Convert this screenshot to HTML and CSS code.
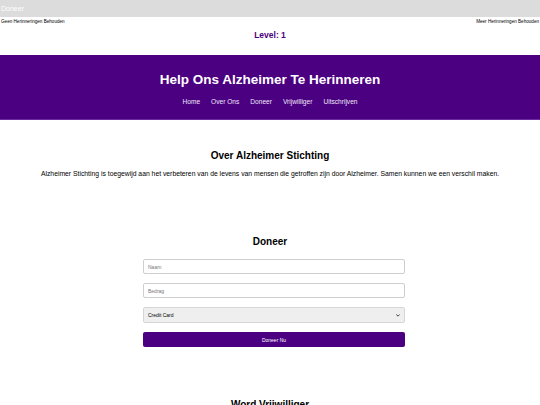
FILE: index.html
```html
<!DOCTYPE html>
<html lang="nl">
<head>
<meta charset="utf-8">
<title>Help Ons Alzheimer Te Herinneren</title>
<link rel="stylesheet" href="styles.css">
</head>
<body>
<div class="topbar">Doneer</div>
<div class="memory-row">
  <span>Geen Herinneringen Behouden</span>
  <span>Meer Herinneringen Behouden</span>
</div>
<div class="level">Level: 1</div>
<header class="site-header">
  <h1>Help Ons Alzheimer Te Herinneren</h1>
  <nav class="nav">
    <a href="#">Home</a>
    <a href="#">Over Ons</a>
    <a href="#">Doneer</a>
    <a href="#">Vrijwilliger</a>
    <a href="#">Uitschrijven</a>
  </nav>
</header>
<section class="about">
  <h2>Over Alzheimer Stichting</h2>
  <p>Alzheimer Stichting is toegewijd aan het verbeteren van de levens van mensen die getroffen zijn door Alzheimer. Samen kunnen we een verschil maken.</p>
</section>
<section class="donate">
  <h2>Doneer</h2>
  <form class="donate-form">
    <input type="text" placeholder="Naam">
    <input type="text" placeholder="Bedrag">
    <select><option>Credit Card</option></select>
    <button type="button">Doneer Nu</button>
  </form>
</section>
<section class="volunteer">
  <h2>Word Vrijwilliger</h2>
</section>
</body>
</html>
```

FILE: styles.css
```css
* { box-sizing: border-box; }
html, body { margin: 0; padding: 0; }
body {
  font-family: "Liberation Sans", Arial, sans-serif;
  color: #000;
  background: #fff;
  width: 540px;
  height: 405px;
  overflow: hidden;
}
.topbar {
  height: 17px;
  background: #dcdcdc;
  color: #fff;
  font-size: 7px;
  line-height: 17px;
  padding-left: 1px;
}
.memory-row {
  display: flex;
  justify-content: space-between;
  font-size: 4.6px;
  color: #000;
  padding: 2px 1px 0;
  height: 8px;
}
.level {
  text-align: center;
  color: #4b0082;
  font-weight: bold;
  font-size: 8.5px;
  padding-top: 5px;
  height: 30px;
}
.site-header {
  background: #4b0082;
  color: #fff;
  text-align: center;
  height: 65px;
  padding-top: 17px;
  border-bottom: 1px solid #6a2aa0;
}
.site-header h1 {
  margin: 0;
  font-size: 13.5px;
  line-height: 16px;
}
.nav {
  display: flex;
  justify-content: center;
  gap: 11px;
  margin-top: 10px;
  font-size: 6.6px;
}
.nav a {
  color: #efe6f8;
  text-decoration: none;
}
.about {
  text-align: center;
  padding-top: 29px;
  height: 105px;
}
h2 {
  margin: 0;
  font-size: 10px;
  line-height: 13px;
}
.about p {
  margin: 8px 0 0;
  font-size: 6.8px;
}
.donate {
  text-align: center;
  height: 173px;
  padding-top: 10px;
}
.donate-form {
  width: 270px;
  padding-left: 8px;
  margin: 11px auto 0;
  display: flex;
  flex-direction: column;
  gap: 9px;
}
.donate-form input,
.donate-form select,
.donate-form button {
  font-family: "Liberation Sans", Arial, sans-serif;
  font-size: 5px;
  height: 15px;
  margin: 0;
  border-radius: 2px;
  padding: 0 4px;
  text-align: left;
}
.donate-form input {
  border: 1px solid #cfcfcf;
  background: #fff;
}
.donate-form input::placeholder { color: #777; }
.donate-form select {
  appearance: none;
  -webkit-appearance: none;
  height: 16px;
  border: 1px solid #d6d6d6;
  background-color: #efefef;
  background-image: url("data:image/svg+xml,%3Csvg xmlns='http://www.w3.org/2000/svg' width='6' height='4' viewBox='0 0 6 4'%3E%3Cpath d='M0.5 0.5 L3 3 L5.5 0.5' fill='none' stroke='%23222' stroke-width='1.3'/%3E%3C/svg%3E");
  background-repeat: no-repeat;
  background-position: right 4px center;
  background-size: 4px 3px;
  color: #000;
}
.donate-form button {
  background: #4b0082;
  color: #fff;
  border: none;
  text-align: center;
}
.volunteer {
  text-align: center;
}
```
